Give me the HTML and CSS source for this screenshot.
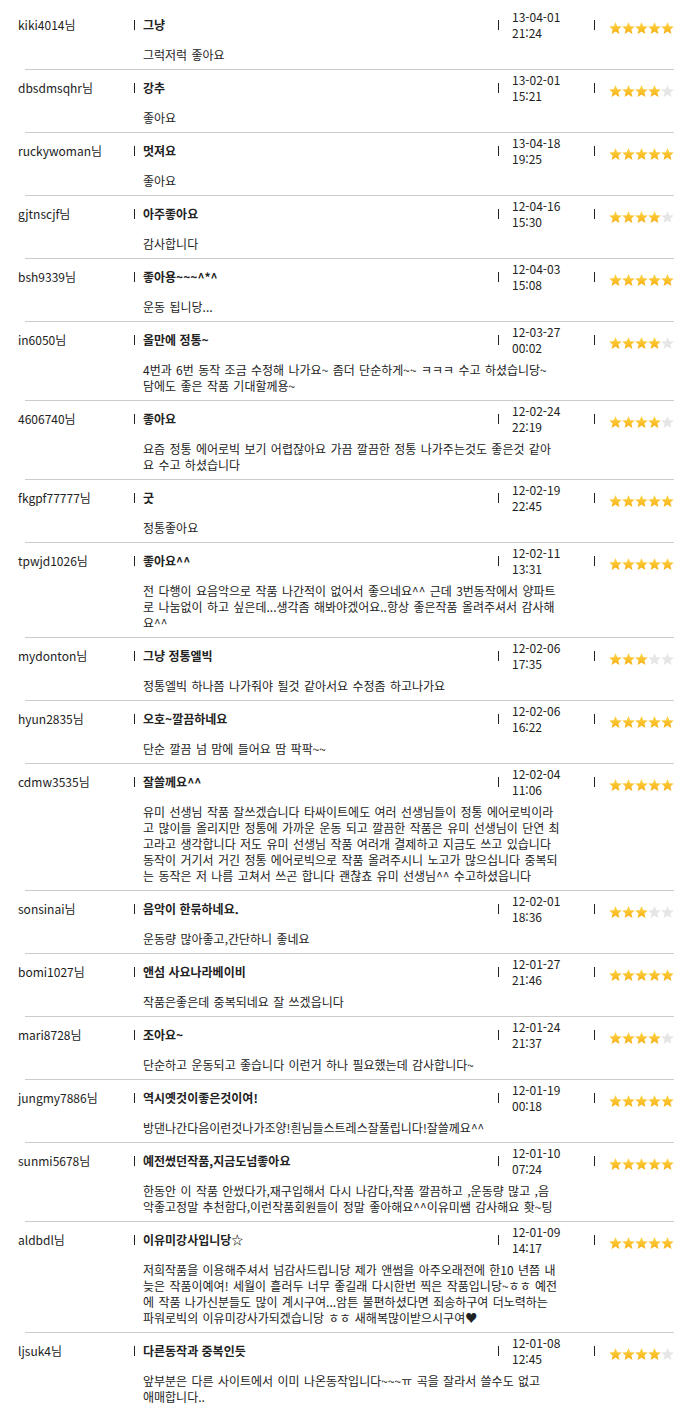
FILE: index.html
```html
<!DOCTYPE html>
<html lang="ko">
<head>
<meta charset="utf-8">
<title>작품 후기</title>
<link rel="stylesheet" href="styles.css">
</head>
<body>
<svg class="defs" width="0" height="0" aria-hidden="true">
  <defs>
    <linearGradient id="gold" x1="0" y1="0" x2="0" y2="1">
      <stop offset="0" stop-color="#ffd84e"/>
      <stop offset="1" stop-color="#f6ae10"/>
    </linearGradient>
    <symbol id="st" viewBox="0 0 13 12">
      <polygon points="6.5,0 8.26,4.17 12.78,4.56 9.35,7.53 10.38,11.94 6.5,9.6 2.62,11.94 3.65,7.53 0.22,4.56 4.74,4.17"/>
    </symbol>
  </defs>
</svg>

<div class="list">

  <div class="item">
    <div class="entry">
      <div class="name">kiki4014님</div>
      <div class="title"><strong>그냥</strong></div>
      <div class="date"><span>13-04-01<br>21:24</span></div>
      <div class="rating"><svg class="stars" width="65" height="12" viewBox="0 0 65 12"><use href="#st" x="0" width="13" height="12" class="on"/><use href="#st" x="13" width="13" height="12" class="on"/><use href="#st" x="26" width="13" height="12" class="on"/><use href="#st" x="39" width="13" height="12" class="on"/><use href="#st" x="52" width="13" height="12" class="on"/></svg></div>
      <div class="comment">그럭저럭 좋아요</div>
    </div>
  </div>

  <div class="item">
    <div class="entry">
      <div class="name">dbsdmsqhr님</div>
      <div class="title"><strong>강추</strong></div>
      <div class="date"><span>13-02-01<br>15:21</span></div>
      <div class="rating"><svg class="stars" width="65" height="12" viewBox="0 0 65 12"><use href="#st" x="0" width="13" height="12" class="on"/><use href="#st" x="13" width="13" height="12" class="on"/><use href="#st" x="26" width="13" height="12" class="on"/><use href="#st" x="39" width="13" height="12" class="on"/><use href="#st" x="52" width="13" height="12" class="off"/></svg></div>
      <div class="comment">좋아요</div>
    </div>
  </div>

  <div class="item">
    <div class="entry">
      <div class="name">ruckywoman님</div>
      <div class="title"><strong>멋져요</strong></div>
      <div class="date"><span>13-04-18<br>19:25</span></div>
      <div class="rating"><svg class="stars" width="65" height="12" viewBox="0 0 65 12"><use href="#st" x="0" width="13" height="12" class="on"/><use href="#st" x="13" width="13" height="12" class="on"/><use href="#st" x="26" width="13" height="12" class="on"/><use href="#st" x="39" width="13" height="12" class="on"/><use href="#st" x="52" width="13" height="12" class="on"/></svg></div>
      <div class="comment">좋아요</div>
    </div>
  </div>

  <div class="item">
    <div class="entry">
      <div class="name">gjtnscjf님</div>
      <div class="title"><strong>아주좋아요</strong></div>
      <div class="date"><span>12-04-16<br>15:30</span></div>
      <div class="rating"><svg class="stars" width="65" height="12" viewBox="0 0 65 12"><use href="#st" x="0" width="13" height="12" class="on"/><use href="#st" x="13" width="13" height="12" class="on"/><use href="#st" x="26" width="13" height="12" class="on"/><use href="#st" x="39" width="13" height="12" class="on"/><use href="#st" x="52" width="13" height="12" class="off"/></svg></div>
      <div class="comment">감사합니다</div>
    </div>
  </div>

  <div class="item">
    <div class="entry">
      <div class="name">bsh9339님</div>
      <div class="title"><strong>좋아용~~~^*^</strong></div>
      <div class="date"><span>12-04-03<br>15:08</span></div>
      <div class="rating"><svg class="stars" width="65" height="12" viewBox="0 0 65 12"><use href="#st" x="0" width="13" height="12" class="on"/><use href="#st" x="13" width="13" height="12" class="on"/><use href="#st" x="26" width="13" height="12" class="on"/><use href="#st" x="39" width="13" height="12" class="on"/><use href="#st" x="52" width="13" height="12" class="on"/></svg></div>
      <div class="comment">운동 됩니당...</div>
    </div>
  </div>

  <div class="item">
    <div class="entry">
      <div class="name">in6050님</div>
      <div class="title"><strong>올만에 정통~</strong></div>
      <div class="date"><span>12-03-27<br>00:02</span></div>
      <div class="rating"><svg class="stars" width="65" height="12" viewBox="0 0 65 12"><use href="#st" x="0" width="13" height="12" class="on"/><use href="#st" x="13" width="13" height="12" class="on"/><use href="#st" x="26" width="13" height="12" class="on"/><use href="#st" x="39" width="13" height="12" class="on"/><use href="#st" x="52" width="13" height="12" class="off"/></svg></div>
      <div class="comment">4번과 6번 동작 조금 수정해 나가요~ 좀더 단순하게~~ ㅋㅋㅋ 수고 하셨습니당~<br>담에도 좋은 작품 기대할께용~</div>
    </div>
  </div>

  <div class="item">
    <div class="entry">
      <div class="name">4606740님</div>
      <div class="title"><strong>좋아요</strong></div>
      <div class="date"><span>12-02-24<br>22:19</span></div>
      <div class="rating"><svg class="stars" width="65" height="12" viewBox="0 0 65 12"><use href="#st" x="0" width="13" height="12" class="on"/><use href="#st" x="13" width="13" height="12" class="on"/><use href="#st" x="26" width="13" height="12" class="on"/><use href="#st" x="39" width="13" height="12" class="on"/><use href="#st" x="52" width="13" height="12" class="off"/></svg></div>
      <div class="comment">요즘 정통 에어로빅 보기 어렵잖아요 가끔 깔끔한 정통 나가주는것도 좋은것 같아<br>요 수고 하셨습니다</div>
    </div>
  </div>

  <div class="item">
    <div class="entry">
      <div class="name">fkgpf77777님</div>
      <div class="title"><strong>굿</strong></div>
      <div class="date"><span>12-02-19<br>22:45</span></div>
      <div class="rating"><svg class="stars" width="65" height="12" viewBox="0 0 65 12"><use href="#st" x="0" width="13" height="12" class="on"/><use href="#st" x="13" width="13" height="12" class="on"/><use href="#st" x="26" width="13" height="12" class="on"/><use href="#st" x="39" width="13" height="12" class="on"/><use href="#st" x="52" width="13" height="12" class="on"/></svg></div>
      <div class="comment">정통좋아요</div>
    </div>
  </div>

  <div class="item">
    <div class="entry">
      <div class="name">tpwjd1026님</div>
      <div class="title"><strong>좋아요^^</strong></div>
      <div class="date"><span>12-02-11<br>13:31</span></div>
      <div class="rating"><svg class="stars" width="65" height="12" viewBox="0 0 65 12"><use href="#st" x="0" width="13" height="12" class="on"/><use href="#st" x="13" width="13" height="12" class="on"/><use href="#st" x="26" width="13" height="12" class="on"/><use href="#st" x="39" width="13" height="12" class="on"/><use href="#st" x="52" width="13" height="12" class="on"/></svg></div>
      <div class="comment">전 다행이 요음악으로 작품 나간적이 없어서 좋으네요^^ 근데 3번동작에서 양파트<br>로 나눔없이 하고 싶은데...생각좀 해봐야겠어요..항상 좋은작품 올려주셔서 감사해<br>요^^</div>
    </div>
  </div>

  <div class="item">
    <div class="entry">
      <div class="name">mydonton님</div>
      <div class="title"><strong>그냥 정통엘빅</strong></div>
      <div class="date"><span>12-02-06<br>17:35</span></div>
      <div class="rating"><svg class="stars" width="65" height="12" viewBox="0 0 65 12"><use href="#st" x="0" width="13" height="12" class="on"/><use href="#st" x="13" width="13" height="12" class="on"/><use href="#st" x="26" width="13" height="12" class="on"/><use href="#st" x="39" width="13" height="12" class="off"/><use href="#st" x="52" width="13" height="12" class="off"/></svg></div>
      <div class="comment">정통엘빅 하나쯤 나가줘야 될것 같아서요 수정좀 하고나가요</div>
    </div>
  </div>

  <div class="item">
    <div class="entry">
      <div class="name">hyun2835님</div>
      <div class="title"><strong>오호~깔끔하네요</strong></div>
      <div class="date"><span>12-02-06<br>16:22</span></div>
      <div class="rating"><svg class="stars" width="65" height="12" viewBox="0 0 65 12"><use href="#st" x="0" width="13" height="12" class="on"/><use href="#st" x="13" width="13" height="12" class="on"/><use href="#st" x="26" width="13" height="12" class="on"/><use href="#st" x="39" width="13" height="12" class="on"/><use href="#st" x="52" width="13" height="12" class="on"/></svg></div>
      <div class="comment">단순 깔끔 넘 맘에 들어요 땀 팍팍~~</div>
    </div>
  </div>

  <div class="item">
    <div class="entry">
      <div class="name">cdmw3535님</div>
      <div class="title"><strong>잘쓸께요^^</strong></div>
      <div class="date"><span>12-02-04<br>11:06</span></div>
      <div class="rating"><svg class="stars" width="65" height="12" viewBox="0 0 65 12"><use href="#st" x="0" width="13" height="12" class="on"/><use href="#st" x="13" width="13" height="12" class="on"/><use href="#st" x="26" width="13" height="12" class="on"/><use href="#st" x="39" width="13" height="12" class="on"/><use href="#st" x="52" width="13" height="12" class="on"/></svg></div>
      <div class="comment">유미 선생님 작품 잘쓰겠습니다 타싸이트에도 여러 선생님들이 정통 에어로빅이라<br>고 많이들 올리지만 정통에 가까운 운동 되고 깔끔한 작품은 유미 선생님이 단연 최<br>고라고 생각합니다 저도 유미 선생님 작품 여러개 결제하고 지금도 쓰고 있습니다<br>동작이 거기서 거긴 정통 에어로빅으로 작품 올려주시니 노고가 많으십니다 중복되<br>는 동작은 저 나름 고쳐서 쓰곤 합니다 괜찮쵸 유미 선생님^^ 수고하셨읍니다</div>
    </div>
  </div>

  <div class="item">
    <div class="entry">
      <div class="name">sonsinai님</div>
      <div class="title"><strong>음악이 한묶하네요.</strong></div>
      <div class="date"><span>12-02-01<br>18:36</span></div>
      <div class="rating"><svg class="stars" width="65" height="12" viewBox="0 0 65 12"><use href="#st" x="0" width="13" height="12" class="on"/><use href="#st" x="13" width="13" height="12" class="on"/><use href="#st" x="26" width="13" height="12" class="on"/><use href="#st" x="39" width="13" height="12" class="off"/><use href="#st" x="52" width="13" height="12" class="off"/></svg></div>
      <div class="comment">운동량 많아좋고,간단하니 좋네요</div>
    </div>
  </div>

  <div class="item">
    <div class="entry">
      <div class="name">bomi1027님</div>
      <div class="title"><strong>앤섬 사요나라베이비</strong></div>
      <div class="date"><span>12-01-27<br>21:46</span></div>
      <div class="rating"><svg class="stars" width="65" height="12" viewBox="0 0 65 12"><use href="#st" x="0" width="13" height="12" class="on"/><use href="#st" x="13" width="13" height="12" class="on"/><use href="#st" x="26" width="13" height="12" class="on"/><use href="#st" x="39" width="13" height="12" class="on"/><use href="#st" x="52" width="13" height="12" class="on"/></svg></div>
      <div class="comment">작품은좋은데 중복되네요 잘 쓰겠읍니다</div>
    </div>
  </div>

  <div class="item">
    <div class="entry">
      <div class="name">mari8728님</div>
      <div class="title"><strong>조아요~</strong></div>
      <div class="date"><span>12-01-24<br>21:37</span></div>
      <div class="rating"><svg class="stars" width="65" height="12" viewBox="0 0 65 12"><use href="#st" x="0" width="13" height="12" class="on"/><use href="#st" x="13" width="13" height="12" class="on"/><use href="#st" x="26" width="13" height="12" class="on"/><use href="#st" x="39" width="13" height="12" class="on"/><use href="#st" x="52" width="13" height="12" class="off"/></svg></div>
      <div class="comment">단순하고 운동되고 좋습니다 이런거 하나 필요했는데 감사합니다~</div>
    </div>
  </div>

  <div class="item">
    <div class="entry">
      <div class="name">jungmy7886님</div>
      <div class="title"><strong>역시옛것이좋은것이여!</strong></div>
      <div class="date"><span>12-01-19<br>00:18</span></div>
      <div class="rating"><svg class="stars" width="65" height="12" viewBox="0 0 65 12"><use href="#st" x="0" width="13" height="12" class="on"/><use href="#st" x="13" width="13" height="12" class="on"/><use href="#st" x="26" width="13" height="12" class="on"/><use href="#st" x="39" width="13" height="12" class="on"/><use href="#st" x="52" width="13" height="12" class="on"/></svg></div>
      <div class="comment">방댄나간다음이런것나가조양!흰님들스트레스잘풀립니다!잘쓸께요^^</div>
    </div>
  </div>

  <div class="item">
    <div class="entry">
      <div class="name">sunmi5678님</div>
      <div class="title"><strong>예전썼던작품,지금도넘좋아요</strong></div>
      <div class="date"><span>12-01-10<br>07:24</span></div>
      <div class="rating"><svg class="stars" width="65" height="12" viewBox="0 0 65 12"><use href="#st" x="0" width="13" height="12" class="on"/><use href="#st" x="13" width="13" height="12" class="on"/><use href="#st" x="26" width="13" height="12" class="on"/><use href="#st" x="39" width="13" height="12" class="on"/><use href="#st" x="52" width="13" height="12" class="on"/></svg></div>
      <div class="comment">한동안 이 작품 안썼다가,재구입해서 다시 나감다,작품 깔끔하고 ,운동량 많고 ,음<br>악좋고정말 추천함다,이런작품회원들이 정말 좋아해요^^이유미쌤 감사해요 홧~팅</div>
    </div>
  </div>

  <div class="item">
    <div class="entry">
      <div class="name">aldbdl님</div>
      <div class="title"><strong>이유미강사입니당☆</strong></div>
      <div class="date"><span>12-01-09<br>14:17</span></div>
      <div class="rating"><svg class="stars" width="65" height="12" viewBox="0 0 65 12"><use href="#st" x="0" width="13" height="12" class="on"/><use href="#st" x="13" width="13" height="12" class="on"/><use href="#st" x="26" width="13" height="12" class="on"/><use href="#st" x="39" width="13" height="12" class="on"/><use href="#st" x="52" width="13" height="12" class="on"/></svg></div>
      <div class="comment">저희작품을 이용해주셔서 넘감사드립니당 제가 앤썸을 아주오래전에 한10 년쯤 내<br>늦은 작품이예여! 세월이 흘러두 너무 좋길래 다시한번 찍은 작품입니당~ㅎㅎ 예전<br>에 작품 나가신분들도 많이 계시구여...암튼 불편하셨다면 죄송하구여 더노력하는<br>파워로빅의 이유미강사가되겠습니당 ㅎㅎ 새해복많이받으시구여♥</div>
    </div>
  </div>

  <div class="item">
    <div class="entry">
      <div class="name">ljsuk4님</div>
      <div class="title"><strong>다른동작과 중복인듯</strong></div>
      <div class="date"><span>12-01-08<br>12:45</span></div>
      <div class="rating"><svg class="stars" width="65" height="12" viewBox="0 0 65 12"><use href="#st" x="0" width="13" height="12" class="on"/><use href="#st" x="13" width="13" height="12" class="on"/><use href="#st" x="26" width="13" height="12" class="on"/><use href="#st" x="39" width="13" height="12" class="on"/><use href="#st" x="52" width="13" height="12" class="off"/></svg></div>
      <div class="comment">앞부분은 다른 사이트에서 이미 나온동작입니다~~~ㅠ 곡을 잘라서 쓸수도 없고<br>애매합니다..</div>
    </div>
  </div>

</div>
</body>
</html>
```

FILE: styles.css
```css
html, body {
  margin: 0;
  padding: 0;
  background: #fff;
}

body {
  font-family: "Noto Sans CJK KR", "Noto Sans", sans-serif;
  font-size: 12px;
  color: #222;
}

.defs {
  display: block;
  width: 0;
  height: 0;
  overflow: hidden;
}

.list {
  padding-top: 7px;
}

.item::after {
  content: "";
  display: block;
  height: 1px;
  margin: 0 18px 0 25px;
  background: #cccccc;
}

.entry {
  display: grid;
  grid-template-columns: 116px 364px 96px 1fr;
  grid-template-rows: 36px auto;
  padding: 0 0 6px 18px;
}

.name {
  align-self: center;
  line-height: 16px;
  white-space: nowrap;
}

.title,
.date,
.rating {
  display: flex;
  align-items: center;
  line-height: 16px;
}

.title::before,
.date::before,
.rating::before {
  content: "";
  flex: none;
  width: 1px;
  height: 10px;
  background: #222;
}

.title::before {
  margin-right: 8px;
}

.date::before {
  margin-right: 13px;
}

.rating::before {
  margin-right: 14px;
}

.title strong {
  font-weight: 700;
  white-space: nowrap;
}

.stars {
  display: block;
  margin-top: 6px;
}

.stars .on {
  fill: url(#gold);
}

.stars .off {
  fill: #e6e6e6;
}

.comment {
  grid-column: 2 / -1;
  margin-top: 4px;
  padding-left: 9px;
  line-height: 16px;
  word-spacing: 1px;
  white-space: nowrap;
}
```
